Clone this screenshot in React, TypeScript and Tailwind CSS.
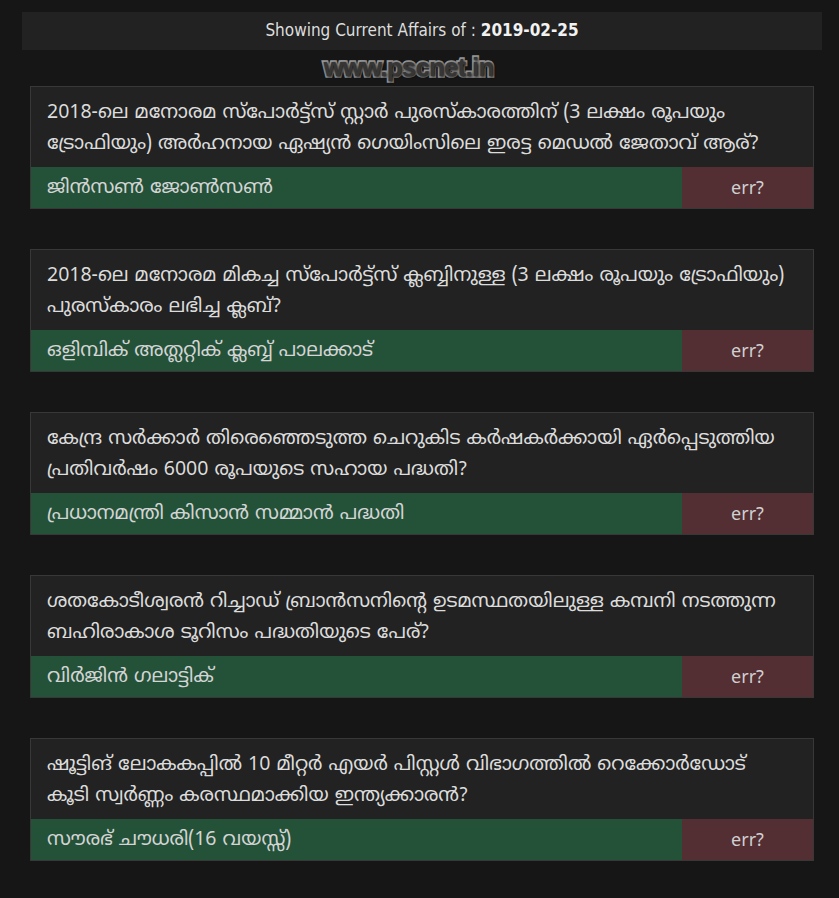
const items = [
  {
    q: '2018-ലെ മനോരമ സ്പോർട്ട്സ് സ്റ്റാർ പുരസ്കാരത്തിന് (3 ലക്ഷം രൂപയും ട്രോഫിയും) അർഹനായ ഏഷ്യൻ ഗെയിംസിലെ ഇരട്ട മെഡൽ ജേതാവ് ആര്?',
    a: 'ജിൻസൺ ജോൺസൺ',
  },
  {
    q: '2018-ലെ മനോരമ മികച്ച സ്പോർട്ട്സ് ക്ലബ്ബിനുള്ള (3 ലക്ഷം രൂപയും ട്രോഫിയും) പുരസ്കാരം ലഭിച്ച ക്ലബ്?',
    a: 'ഒളിമ്പിക് അത്ലറ്റിക് ക്ലബ്ബ് പാലക്കാട്',
  },
  {
    q: 'കേന്ദ്ര സർക്കാർ തിരെഞ്ഞെടുത്ത ചെറുകിട കർഷകർക്കായി ഏർപ്പെടുത്തിയ പ്രതിവർഷം 6000 രൂപയുടെ സഹായ പദ്ധതി?',
    a: 'പ്രധാനമന്ത്രി കിസാൻ സമ്മാൻ പദ്ധതി',
  },
  {
    q: 'ശതകോടീശ്വരൻ റിച്ചാഡ് ബ്രാൻസനിന്റെ ഉടമസ്ഥതയിലുള്ള കമ്പനി നടത്തുന്ന ബഹിരാകാശ ടൂറിസം പദ്ധതിയുടെ പേര്?',
    a: 'വിർജിൻ ഗലാട്ടിക്',
  },
  {
    q: 'ഷൂട്ടിങ് ലോകകപ്പിൽ 10 മീറ്റർ എയർ പിസ്റ്റൾ വിഭാഗത്തിൽ റെക്കോർഡോട് കൂടി സ്വർണ്ണം കരസ്ഥമാക്കിയ ഇന്ത്യക്കാരൻ?',
    a: 'സൗരഭ് ചൗധരി(16 വയസ്സ്)',
  },
];

export default function App() {
  return (
    <div className="min-h-[898px] bg-[#161616] pt-[12px] pb-[37px] font-['Noto_Sans_Malayalam','Noto_Sans',sans-serif]">
      {/* Header */}
      <div className="ml-[22px] w-[800px] h-[38px] bg-[#222222] flex items-center justify-center text-[17px] text-[#dddddd] font-['DejaVu_Sans_Condensed','DejaVu_Sans',sans-serif]">
        <span>Showing Current Affairs of :&nbsp;</span>
        <span className="font-bold text-[#f2f2f2]">2019-02-25</span>
      </div>

      {/* Site name */}
      <div className="h-[36px] flex items-center justify-center pr-[22px]">
        <span className="text-[25.5px] font-bold tracking-[-0.6px] leading-none text-[#363636] font-['Liberation_Sans',Arial,sans-serif] [-webkit-text-stroke:3.5px_#999999] [paint-order:stroke_fill] [text-shadow:1px_1px_3px_#000]">
          www.pscnet.in
        </span>
      </div>

      {/* Cards */}
      <div className="ml-[30px] w-[784px] flex flex-col gap-[40px]">
        {items.map((it, i) => (
          <div key={i} className="border border-[#383838] bg-[#222222]">
            <div className="pl-[16px] pr-[20px] pt-[11px] pb-[7px] text-[19.5px] leading-[31px] text-[#dcdcdc]">{it.q}</div>
            <div className="flex h-[41px]">
              <div className="flex-1 bg-[#235239] text-[#d4d4d4] pl-[16px] pt-[3px] flex items-center text-[19.5px]">{it.a}</div>
              <div className="w-[131px] bg-[#532e33] text-[#d0d0d0] flex items-center justify-center text-[18px] font-['Noto_Sans',sans-serif]">err?</div>
            </div>
          </div>
        ))}
      </div>
    </div>
  );
}
